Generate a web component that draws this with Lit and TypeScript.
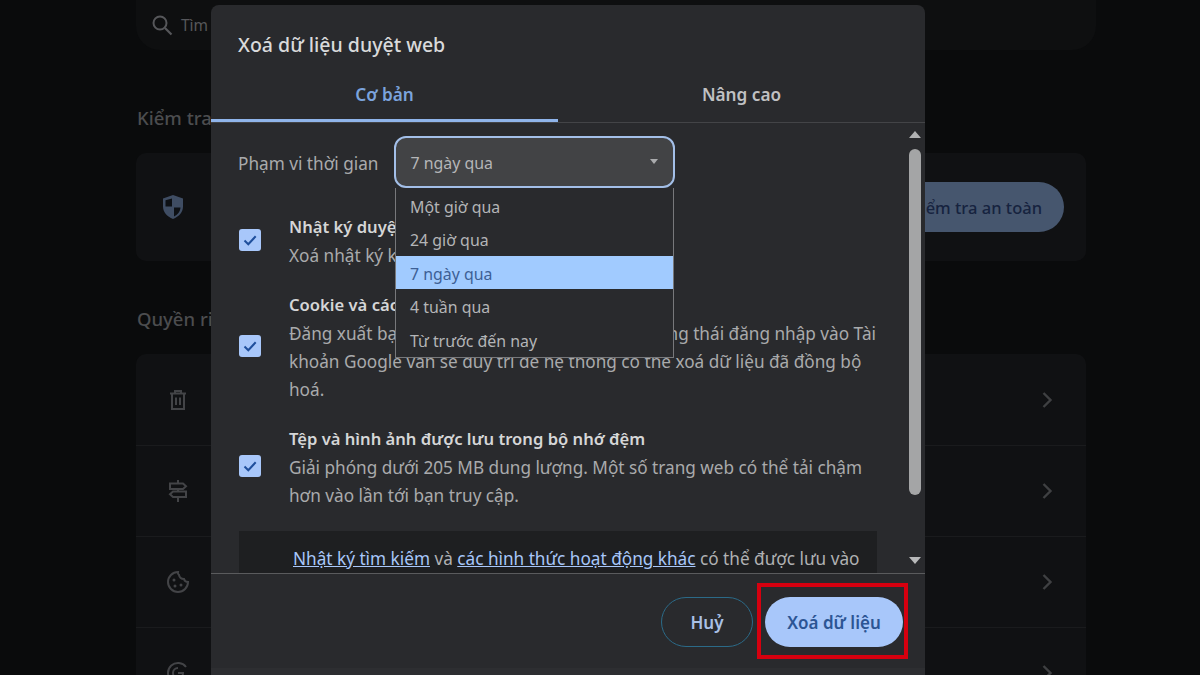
import { LitElement, html, css, svg } from "lit";
import { customElement } from "lit/decorators.js";

const check = html`<svg viewBox="0 0 22 22" width="22" height="22"><path d="M5.5 11.5l3.8 3.800 7.400-8" fill="none" stroke="#1f4f9c" stroke-width="2"/></svg>`;
const chevron = html`<svg class="chev" viewBox="0 0 12 20" width="12" height="20"><path d="M2.5 3l7 7-7 7" fill="none" stroke="#3f4042" stroke-width="2.4"/></svg>`;
const icons = [
  svg`<path d="M5 6.500h16M10 6.500V4h6v2.500M7 6.500V22h12V6.500M11 10.500v7.500M15 10.500v7.500" fill="none" stroke="#434447" stroke-width="2"/>`,
  svg`<path d="M13 2v3M13 11v2M13 19v5M5 5.500h13l3 2.750L18 11H5zM21 13.500H8l-3 2.750L8 19h13z" fill="none" stroke="#434447" stroke-width="2"/>`,
  svg`<path d="M13 3a10 10 0 1 0 10 10c-2.500 0-3.500-1-4-3-2.500 0-4.500-1.500-5-4-1-.5-1.200-2-1-3z" fill="none" stroke="#434447" stroke-width="2"/><circle cx="9" cy="11" r="1.500" fill="#434447"/><circle cx="10" cy="17" r="1.500" fill="#434447"/><circle cx="16" cy="16" r="1.500" fill="#434447"/>`,
  svg`<path d="M21 7a10 10 0 1 0 0 12M13 8a5 5 0 1 0 5 5h-5" fill="none" stroke="#434447" stroke-width="2"/>`,
];

@customElement("app-root")
export class AppRoot extends LitElement {
  static styles = css`
    :host {
      display: block;
      position: relative;
      width: 1200px;
      height: 675px;
      overflow: hidden;
      background: #0a0b0c;
      font-family: "Noto Sans", "Open Sans", sans-serif;
    }
    .page {
      width: 960px;
      margin-left: 136px;
      display: flex;
      flex-direction: column;
    }
    .search {
      height: 50px;
      border-radius: 0 0 24px 24px;
      background: #0e0f10;
      display: flex;
      align-items: center;
      gap: 7px;
      padding-left: 14px;
      color: #56575a;
      font-size: 15.500px;
    }
    .heading {
      color: #4c4d4f;
      font-size: 18.500px;
      font-weight: 500;
      line-height: 24px;
      padding-left: 1px;
      white-space: nowrap;
    }
    .h1 { margin-top: 56px; }
    .h2 { margin-top: 46px; }
    .card {
      width: 950px;
      background: #101113;
      border-radius: 10px;
    }
    .safety {
      margin-top: 23px;
      height: 108px;
      display: flex;
      align-items: center;
      justify-content: space-between;
      padding: 0 22px 0 26px;
      box-sizing: border-box;
    }
    .shield { margin-top: -1px; }
    .safe-btn {
      height: 50px;
      width: 220px;
      border-radius: 25px;
      background: #46566e;
      color: #16233f;
      font-size: 16.500px;
      font-weight: 500;
      display: flex;
      align-items: center;
      justify-content: flex-end;
      padding-right: 22px;
      box-sizing: border-box;
    }
    .perm { margin-top: 23px; }
    .perm-row {
      height: 91px;
      display: flex;
      align-items: center;
      justify-content: space-between;
      padding: 0 33px 0 29px;
      box-sizing: border-box;
      border-top: 1px solid #1a1b1d;
    }
    .perm-row:first-child { border-top: 0; }

    .dialog {
      position: absolute;
      left: 211px;
      top: 5px;
      width: 714px;
      height: 670px;
      background: linear-gradient(#292a2d 663px, #2d2e31 663px);
      border-radius: 8px 8px 0 0;
      display: flex;
      flex-direction: column;
      color: #a9aaac;
      font-size: 17.200px;
    }
    .title {
      height: 75px;
      padding: 26px 0 0 27px;
      box-sizing: border-box;
      font-size: 19.500px;
      line-height: 27px;
      color: #d9dadb;
      font-weight: 500;
      flex: none;
    }
    .tabs {
      flex: none;
      display: grid;
      grid-template-columns: 347px 1fr;
      height: 42px;
      border-bottom: 1px solid #434447;
      font-size: 17.200px;
      font-weight: 600;
    }
    .tab {
      display: flex;
      justify-content: center;
      align-items: flex-start;
      line-height: 29px;
      color: #c0c1c3;
    }
    .tab.on {
      color: #7ba3dc;
      border-bottom: 3px solid #8fb4ea;
    }
    .body {
      position: relative;
      flex: 1;
      min-height: 0;
      overflow: hidden;
      padding: 13px 0 0 27px;
    }
    .range {
      display: flex;
      align-items: center;
      gap: 16px;
      height: 52px;
    }
    .range > span { padding-top: 2px; }
    .select {
      flex: none;
      width: 281px;
      height: 52px;
      box-sizing: border-box;
      border: 2px solid #a3bfe8;
      border-radius: 12px;
      background: #424345;
      display: flex;
      align-items: center;
      justify-content: space-between;
      padding: 2px 15px 0 14px;
      color: #b5b6b8;
      font-size: 15.900px;
    }
    .caret {
      width: 0;
      height: 0;
      border-left: 4.500px solid transparent;
      border-right: 4.500px solid transparent;
      border-top: 5px solid #aaabad;
      margin-top: -4px;
    }
    .popup {
      position: absolute;
      left: 184px;
      top: 65px;
      width: 279px;
      height: 169.500px;
      box-sizing: border-box;
      background: #292a2d;
      border: 1px solid #77787b;
      border-top: 0;
      display: flex;
      flex-direction: column;
      z-index: 2;
      color: #b4b5b7;
      font-size: 15.900px;
      overflow: hidden;
    }
    .opt {
      height: 33.500px;
      line-height: 36px;
      padding-left: 14px;
      flex: none;
    }
    .opt.first { margin-top: 0.500px; }
    .opt.sel { background: #a1cbff; color: #3d5f95; }
    .row {
      display: flex;
      align-items: center;
      gap: 28px;
      margin-top: 21px;
    }
    .row.r1 { margin-top: 25px; }
    .box {
      flex: none;
      width: 22px;
      height: 22px;
      border-radius: 3px;
      background: #a8c7fa;
      margin-left: 1px;
      margin-top: -3px;
    }
    .txt { line-height: 28px; white-space: nowrap; }
    .strong { color: #d5d6d7; font-weight: 600; font-size: 16.600px; line-height: 27px; margin-bottom: 2px; }
    .info {
      margin-top: 21px;
      width: 638px;
      margin-left: 1px;
      height: 60px;
      background: #1e1f21;
      padding: 15px 0 0 54px;
      box-sizing: border-box;
      line-height: 26px;
      white-space: nowrap;
      color: #b0b1b3;
    }
    .info a { color: #a8c7fa; text-decoration: underline; }
    .bar {
      position: absolute;
      left: 698px;
      top: 0;
      width: 16px;
      height: 100%;
    }
    .thumb {
      position: absolute;
      left: 0;
      top: 26px;
      width: 12px;
      height: 346px;
      border-radius: 6px;
      background: #a4a5a6;
    }
    .arrow {
      position: absolute;
      left: 0;
      width: 0;
      height: 0;
      border-left: 6px solid transparent;
      border-right: 6px solid transparent;
    }
    .up { top: 8px; border-bottom: 7px solid #b0b1b2; }
    .down { top: 434px; border-top: 7px solid #b8b9ba; }
    .footer {
      flex: none;
      height: 95px;
      margin-bottom: 7px;
      box-sizing: border-box;
      border-top: 1px solid #5a5b5d;
      display: flex;
      justify-content: flex-end;
      align-items: flex-start;
      gap: 12px;
      padding: 23px 22px 0 0;
    }
    .btn {
      height: 50px;
      border-radius: 25px;
      box-sizing: border-box;
      display: flex;
      align-items: center;
      justify-content: center;
      font-size: 17px;
      font-weight: 600;
    }
    .cancel {
      width: 92px;
      border: 1.500px solid #2b6a88;
      color: #a9c1e6;
    }
    .ok {
      width: 138px;
      background: #a8c7fa;
      color: #2c5594;
    }
    .mark {
      position: absolute;
      left: 757px;
      top: 583px;
      width: 151px;
      height: 76px;
      box-sizing: border-box;
      border: 4px solid #d6000f;
      z-index: 3;
    }
  `;

  render() {
    return html`
      <div class="page">
        <div class="search">
          <svg viewBox="0 0 24 24" width="24" height="24"><circle cx="10" cy="10" r="6.500" fill="none" stroke="#56575a" stroke-width="2"/><path d="M15 15l6.500 6.500" stroke="#56575a" stroke-width="2.200"/></svg>
          <span>Tìm kiếm</span>
        </div>
        <div class="heading h1">Kiểm tra an toàn</div>
        <div class="card safety">
          <svg class="shield" viewBox="0 0 22 26" width="22" height="26">
            <path d="M11 1l10 3.500v8c0 5.500-4 10-10 12.500C5 22.500 1 18 1 12.500v-8z" fill="#3f4d63"/>
            <path d="M10 4.500V12.500H3.500V6.300zM12 13.500h6.500c-.3 4-3 7.500-6.500 9z" fill="#0d1014"/>
          </svg>
          <div class="safe-btn">Kiểm tra an toàn</div>
        </div>
        <div class="heading h2">Quyền riêng tư và bảo mật</div>
        <div class="card perm">
          ${icons.map(
            (i) => html`<div class="perm-row">
              <svg viewBox="0 0 26 26" width="26" height="26">${i}</svg>
              ${chevron}
            </div>`
          )}
        </div>
      </div>

      <div class="dialog">
        <div class="title">Xoá dữ liệu duyệt web</div>
        <div class="tabs">
          <div class="tab on">Cơ bản</div>
          <div class="tab">Nâng cao</div>
        </div>
        <div class="body">
          <div class="range">
            <span>Phạm vi thời gian</span>
            <div class="select"><span>7 ngày qua</span><i class="caret"></i></div>
          </div>
          <div class="popup">
            <div class="opt first">Một giờ qua</div>
            <div class="opt">24 giờ qua</div>
            <div class="opt sel">7 ngày qua</div>
            <div class="opt">4 tuần qua</div>
            <div class="opt">Từ trước đến nay</div>
          </div>
          <div class="row r1">
            <div class="box">${check}</div>
            <div class="txt"><div class="strong">Nhật ký duyệt web</div>Xoá nhật ký khỏi tất cả các thiết bị đã đồng bộ</div>
          </div>
          <div class="row">
            <div class="box">${check}</div>
            <div class="txt"><div class="strong">Cookie và các dữ liệu khác của trang web</div>Đăng xuất bạn khỏi hầu hết web. Bạn vẫn ở trạng thái đăng nhập vào Tài<br />khoản Google vẫn sẽ duy trì để hệ thống có thể xoá dữ liệu đã đồng bộ<br />hoá.</div>
          </div>
          <div class="row">
            <div class="box">${check}</div>
            <div class="txt"><div class="strong">Tệp và hình ảnh được lưu trong bộ nhớ đệm</div>Giải phóng dưới 205 MB dung lượng. Một số trang web có thể tải chậm<br />hơn vào lần tới bạn truy cập.</div>
          </div>
          <div class="info"><a>Nhật ký tìm kiếm</a> và <a>các hình thức hoạt động khác</a> có thể được lưu vào</div>
          <div class="bar">
            <i class="arrow up"></i>
            <div class="thumb"></div>
            <i class="arrow down"></i>
          </div>
        </div>
        <div class="footer">
          <div class="btn cancel">Huỷ</div>
          <div class="btn ok">Xoá dữ liệu</div>
        </div>
      </div>
      <div class="mark"></div>
    `;
  }
}
